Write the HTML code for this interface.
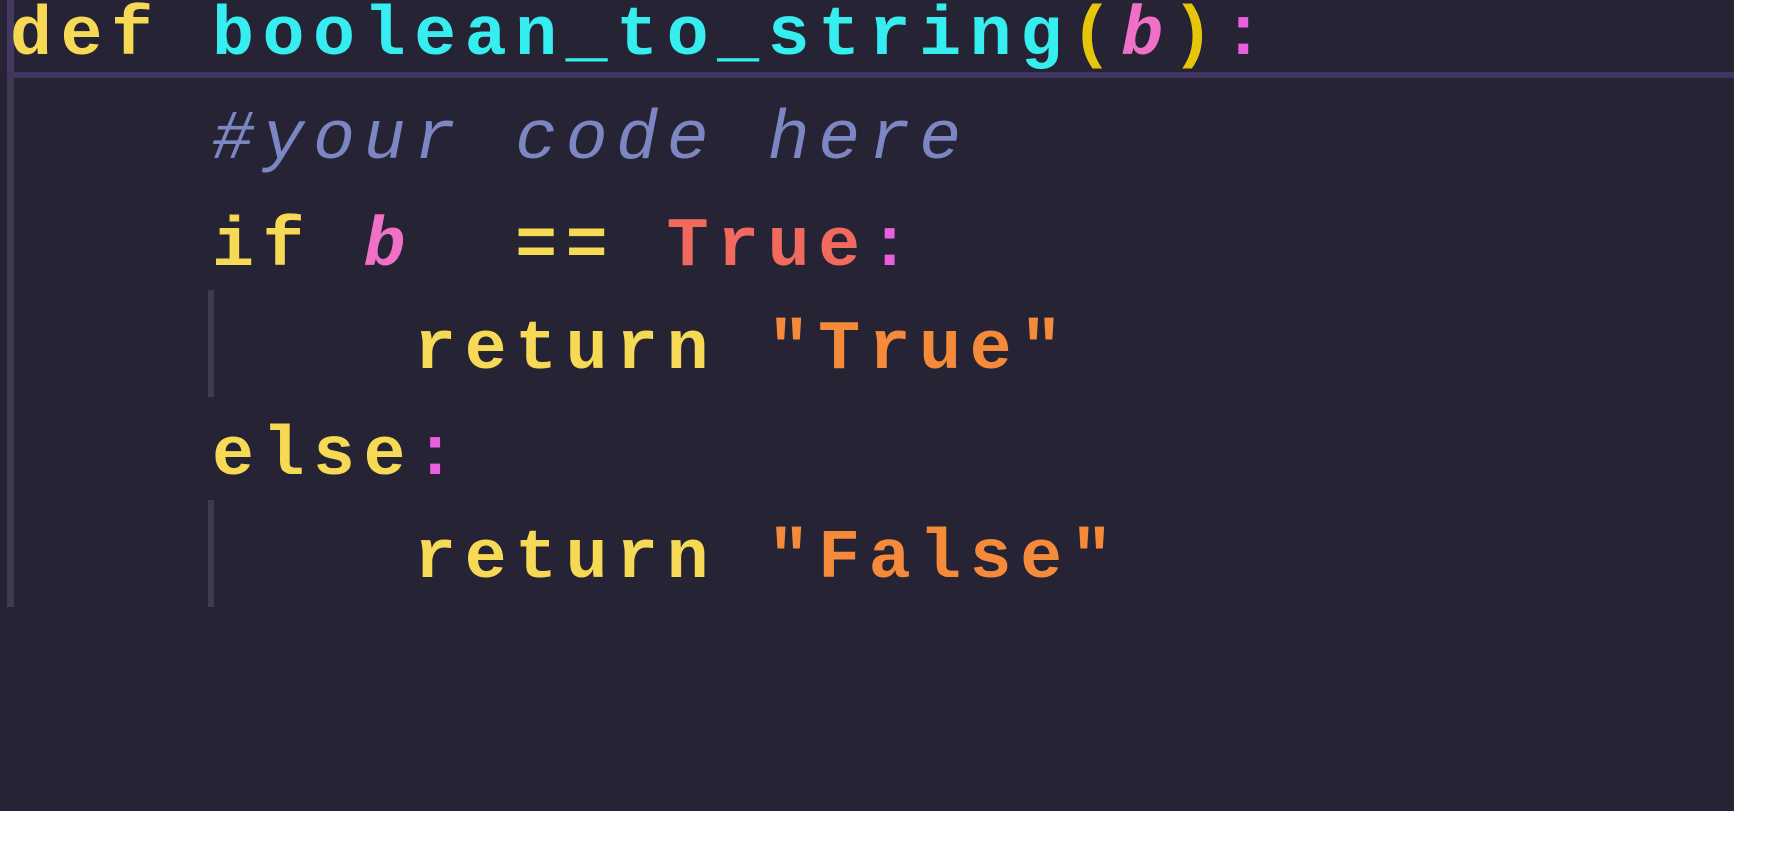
<!DOCTYPE html>
<html><head><meta charset="utf-8"><style>
html,body{margin:0;padding:0;background:#fff;width:1768px;height:861px;overflow:hidden}
#ed{position:absolute;left:0;top:0;width:1734px;height:811px;background:#252334}
.ln{position:absolute;left:10px;white-space:pre;font-family:"Liberation Mono","DejaVu Sans Mono",monospace;font-size:70px;letter-spacing:8.5px;line-height:70px;font-weight:bold}
.k{color:#f6d955}.f{color:#36eef0}.p{color:#f070c8;font-style:italic}.y{color:#e6c60a}.c{color:#ea5fe0}
.cm{color:#7c86c2;font-style:italic;font-weight:normal}.t{color:#f06a5e}.s{color:#f58a3a}
.bar{position:absolute;background:#3e3b50}
</style></head><body>
<div id="ed">
<div class="bar" style="left:7px;top:0;width:7px;height:78px;background:#45395f"></div>
<div class="bar" style="left:7px;top:78px;width:7px;height:529px"></div>
<div style="position:absolute;left:7px;top:72px;width:1727px;height:6px;background:#3f3560"></div>
<div class="bar" style="left:208px;top:290px;width:6px;height:107px"></div>
<div class="bar" style="left:208px;top:500px;width:6px;height:107px"></div>
<div class="ln" style="top:2px"><span class="k">def</span> <span class="f">boolean_to_string</span><span class="y">(</span><span class="p">b</span><span class="y">)</span><span class="c">:</span></div>
<div class="ln" style="top:106px">    <span class="cm">#your code here</span></div>
<div class="ln" style="top:213px">    <span class="k">if</span> <span class="p">b</span>  <span class="k">==</span> <span class="t">True</span><span class="c">:</span></div>
<div class="ln" style="top:316px">        <span class="k">return</span> <span class="s">"True"</span></div>
<div class="ln" style="top:422px">    <span class="k">else</span><span class="c">:</span></div>
<div class="ln" style="top:525px">        <span class="k">return</span> <span class="s">"False"</span></div>
</div>
</body></html>
